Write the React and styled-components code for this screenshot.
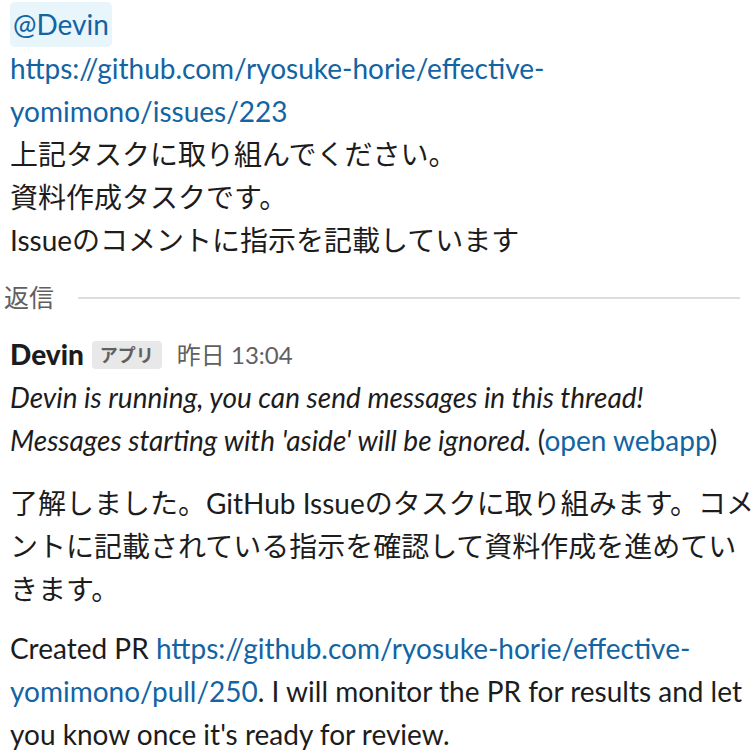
import React from "react";
import styled, { createGlobalStyle } from "styled-components";

const Global = createGlobalStyle`
  body {
    margin: 0;
    background: #fff;
    font-family: Lato, "Noto Sans CJK JP", sans-serif;
    color: #1d1c1d;
  }
`;

const Page = styled.div`
  padding: 2px 0 0 10px;
  font-size: 28px;
  line-height: 43px;
`;

const Block = styled.div``;

const Line = styled.div``;

const Mention = styled.span`
  display: inline-block;
  background: #e8f5fa;
  color: #1264a3;
  border-radius: 5px;
  padding: 1px 3px;
  line-height: 43px;
`;

const Link = styled.a`
  color: #1264a3;
  text-decoration: none;
`;

const Divider = styled.div`
  display: flex;
  align-items: center;
  gap: 24px;
  margin: 14px 14px 0 -6px;
  color: #616061;
  font-size: 25px;

  &::after {
    content: "";
    flex: 1;
    height: 2px;
    background: #dddddd;
  }
`;

const Header = styled.div`
  display: flex;
  align-items: center;
  margin-top: 14px;
`;

const Name = styled.span`
  font-weight: 900;
`;

const Badge = styled.span`
  margin-left: 8px;
  background: #e8e8e8;
  color: #616061;
  font-size: 18px;
  font-weight: 700;
  line-height: 28px;
  padding: 0 8px;
  border-radius: 4px;
`;

const Time = styled.span`
  margin-left: 15px;
  color: #616061;
  font-size: 24px;
`;

const Italic = styled.div`
  font-style: italic;
`;

const Plain = styled.span`
  font-style: normal;
`;

const Para = styled.p`
  margin: ${(p) => p.$gap || 16}px 0 0;
`;

export default function App() {
  return (
    <>
      <Global />
      <Page>
        <Block>
          <Mention>@Devin</Mention>
          <Line>
            <Link>https://github.com/ryosuke-horie/effective-yomimono/issues/223</Link>
          </Line>
          <Line>上記タスクに取り組んでください。</Line>
          <Line>資料作成タスクです。</Line>
          <Line>Issueのコメントに指示を記載しています</Line>
        </Block>
        <Divider>返信</Divider>
        <Header>
          <Name>Devin</Name>
          <Badge>アプリ</Badge>
          <Time>昨日 13:04</Time>
        </Header>
        <Italic>
          Devin is running, you can send messages in this thread!
          <br />
          Messages starting with 'aside' will be ignored.{" "}
          <Plain>
            (<Link>open webapp</Link>)
          </Plain>
        </Italic>
        <Para $gap={20}>
          了解しました。GitHub Issueのタスクに取り組みます。コメントに記載されている指示を確認して資料作成を進めていきます。
        </Para>
        <Para>
          Created PR <Link>https://github.com/ryosuke-horie/effective-yomimono/pull/250</Link>. I will monitor the PR for
          results and let you know once it's ready for review.
        </Para>
      </Page>
    </>
  );
}
